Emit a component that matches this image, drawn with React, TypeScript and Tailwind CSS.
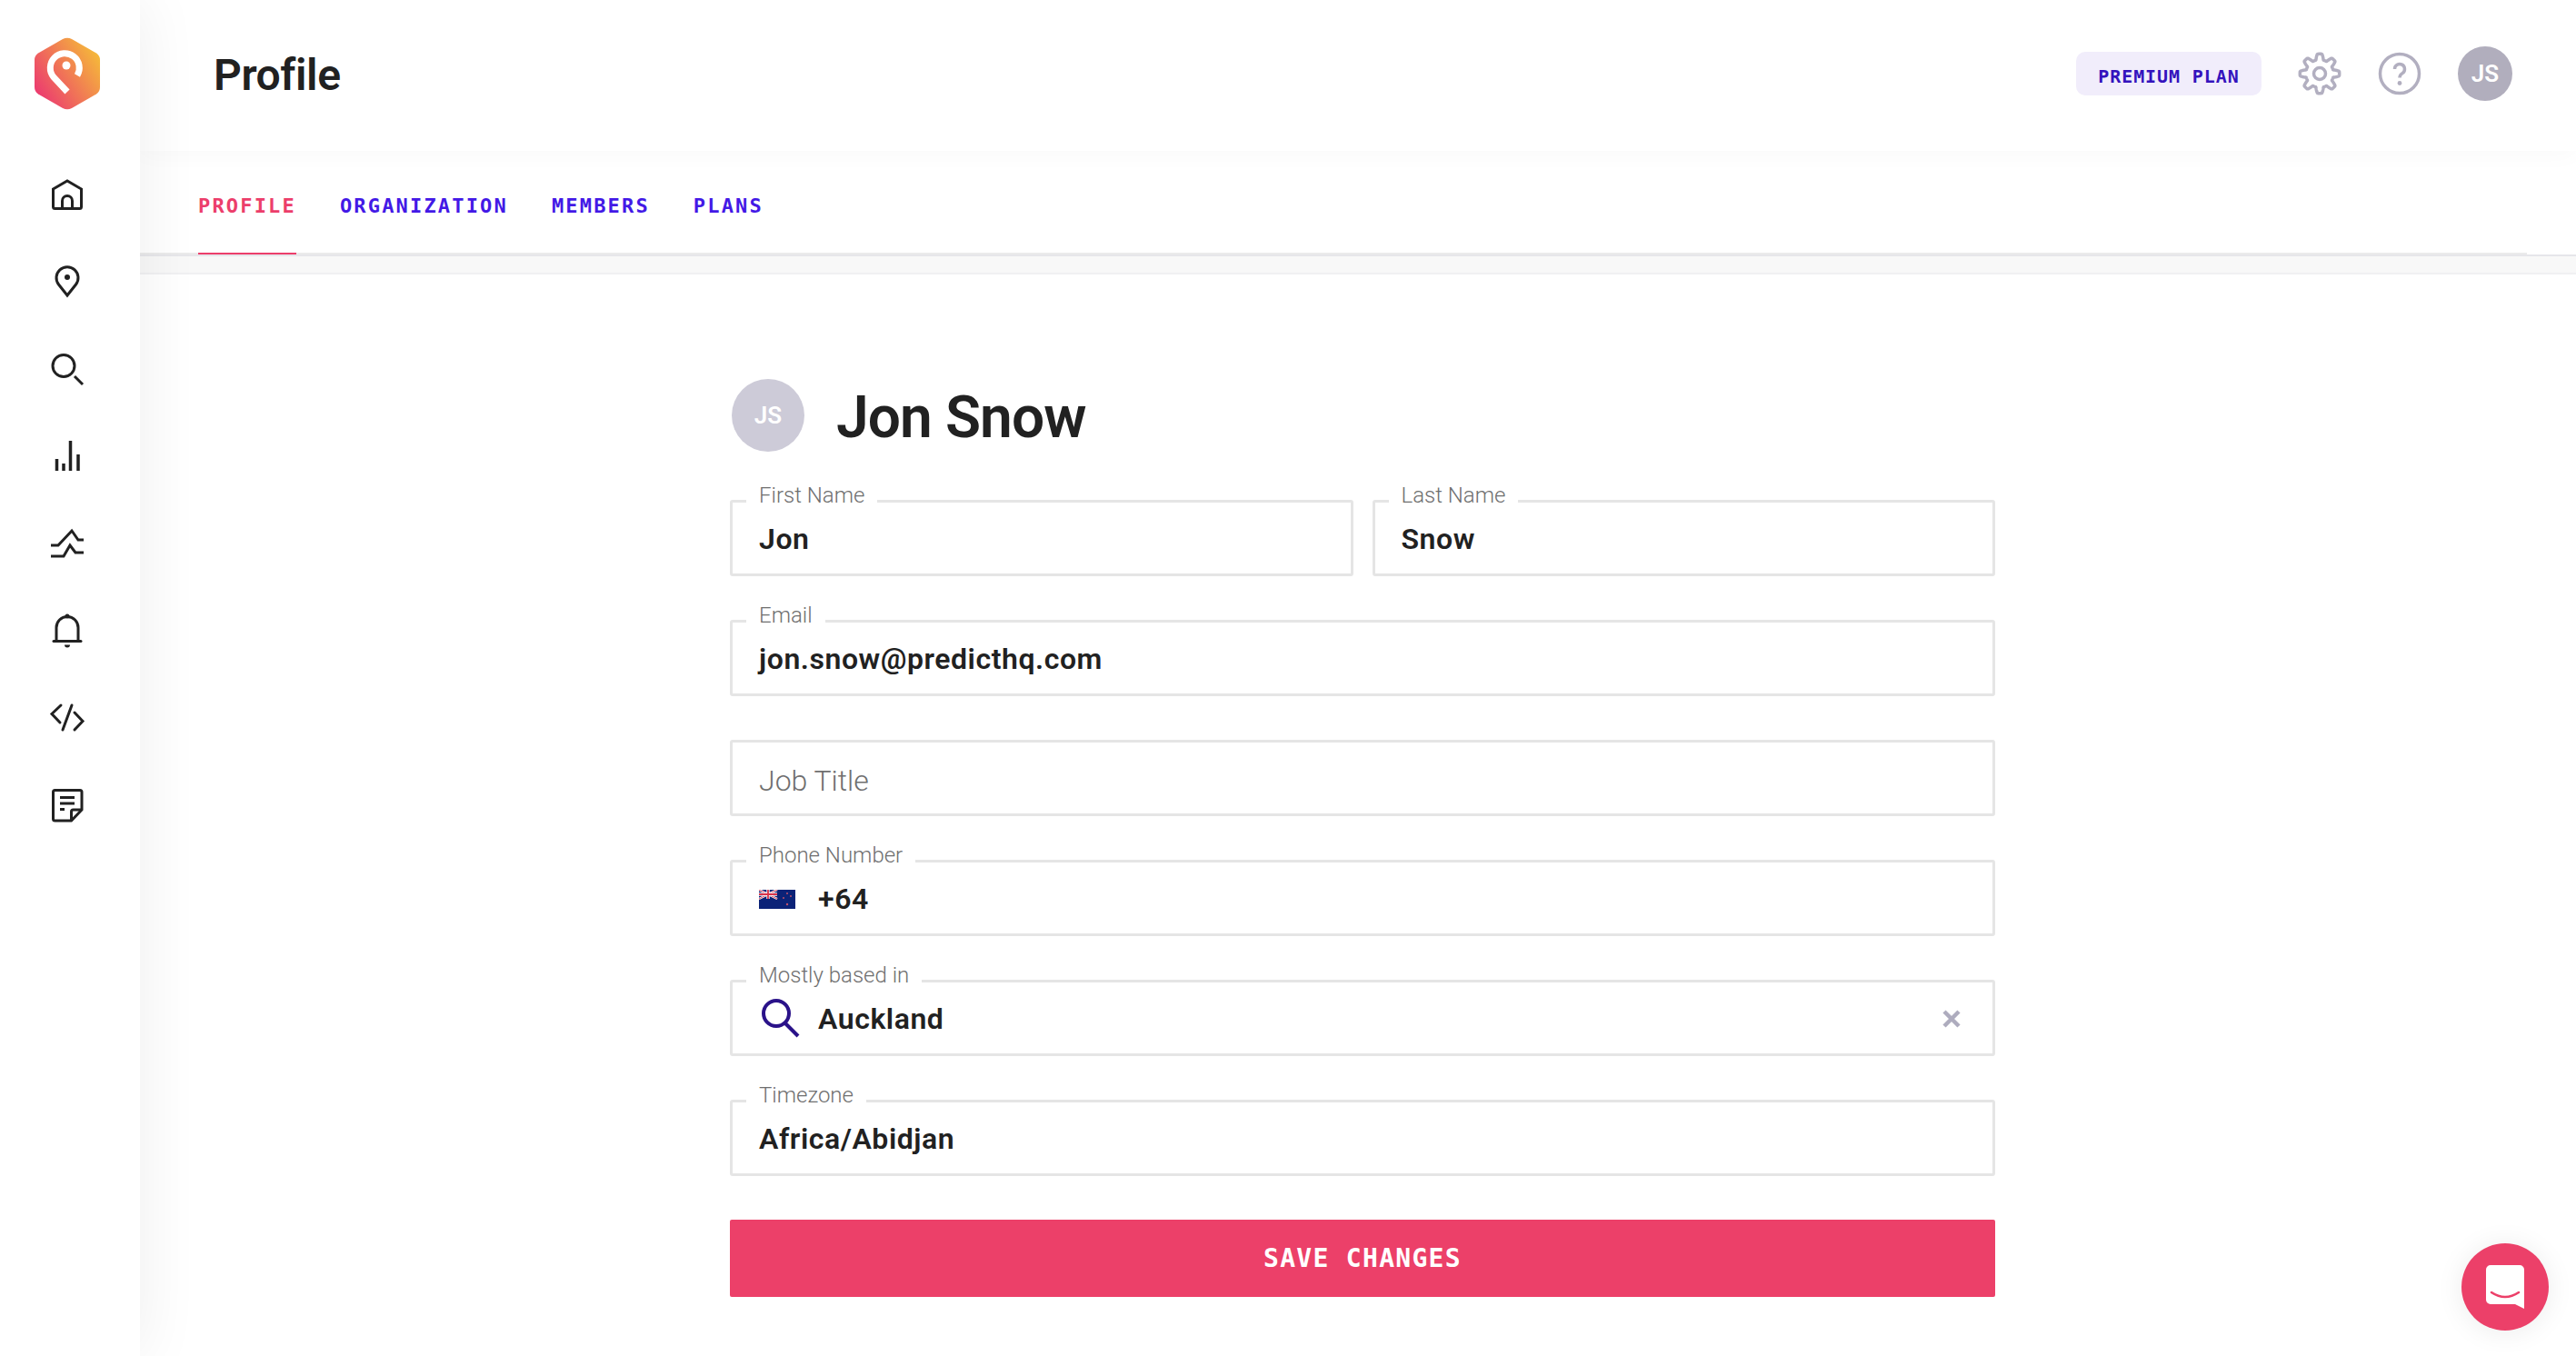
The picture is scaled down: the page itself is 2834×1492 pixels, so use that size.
import { ReactNode } from "react";

const sans = "font-['Roboto',sans-serif]";

function gearPath() {
  const pts: string[] = [];
  for (let i = 0; i < 240; i++) {
    const t = (i / 240) * Math.PI * 2;
    const wave = Math.max(-1, Math.min(1, Math.cos(8 * t) * 1.7));
    const r = 18.5 + wave * 3.2;
    const x = 24 + r * Math.sin(t);
    const y = 24 - r * Math.cos(t);
    pts.push(`${x.toFixed(2)} ${y.toFixed(2)}`);
  }
  return "M" + pts.join("L") + "Z";
}

function Logo() {
  return (
    <svg width="72" height="80" viewBox="0 0 72 80">
      <defs>
        <linearGradient id="logoGrad" x1="0.08" y1="0.8" x2="0.95" y2="0.2">
          <stop offset="0" stopColor="#ec3e6e" />
          <stop offset="1" stopColor="#f5b83a" />
        </linearGradient>
      </defs>
      <path
        d="M31 2 Q36 -0.5 41 2 L68 17.5 Q72 20 72 25 V55 Q72 60 68 62.5 L41 78 Q36 80.5 31 78 L4 62.5 Q0 60 0 55 V25 Q0 20 4 17.5 Z"
        fill="url(#logoGrad)"
      />
      <path
        d="M36 60 L21 44 A16 16 0 1 1 47 42"
        fill="none"
        stroke="#fff"
        strokeWidth="7"
      />
      <circle cx="35" cy="31" r="4.5" fill="#fff" />
    </svg>
  );
}

const navIcons: ReactNode[] = [
  <>
    <path d="M8.5 19 L24 10 L39.5 19 V38.5 a2 2 0 0 1 -2 2 H10.5 a2 2 0 0 1 -2 -2 Z" />
    <path d="M18.5 40 V32 a5.5 5.5 0 0 1 11 0 V40" />
  </>,
  <>
    <path d="M24 40 L14.5 28 A12 12 0 1 1 33.5 28 Z" />
    <circle cx="24" cy="20" r="3" fill="#212121" stroke="none" />
  </>,
  <>
    <circle cx="20" cy="21.5" r="12" />
    <path d="M32 33 L41 42" />
  </>,
  <path d="M12.5 28 V41 M20 33 V41 M27.5 8 V41 M36 23 V41" strokeWidth="3.5" />,
  <>
    <path d="M6 27 H14 L29 11 L36 21 H42" />
    <path d="M6 39 H20 L27 27 L33 35 H42" />
  </>,
  <>
    <path d="M12 36.5 V21.5 a12 12 0 0 1 24 0 V36.5" />
    <path d="M9 36.5 H39" strokeLinecap="round" />
    <path d="M21 40.5 h6 a3 3 0 0 1 -6 0 Z" fill="#212121" stroke="none" />
    <circle cx="24" cy="9" r="2.5" fill="#212121" stroke="none" />
  </>,
  <path d="M17 11 L7 20.5 L16 30 M32 19 L41 28.5 L32 38 M29 11 L19 38" strokeLinecap="round" />,
  <>
    <path d="M8.5 10.5 a2 2 0 0 1 2 -2 H38 a2 2 0 0 1 2 2 V30 L28.5 42 H10.5 a2 2 0 0 1 -2 -2 Z" />
    <path d="M28.5 42 V32 a2 2 0 0 1 2 -2 H40" />
    <path d="M16 16.5 H32 M16 23 H32 M16 29.5 H21" />
  </>,
];

function NavIcon({ children }: { children: ReactNode }) {
  return (
    <div className="flex h-24 items-center justify-center">
      <svg width="48" height="48" viewBox="0 0 48 48" fill="none" stroke="#212121" strokeWidth="3">
        {children}
      </svg>
    </div>
  );
}

function Flag() {
  return (
    <svg width="40" height="21" viewBox="0 0 40 21">
      <rect width="40" height="21" fill="#0b2277" />
      <path d="M0 0 L20 10 M20 0 L0 10" stroke="#fff" strokeWidth="2.4" />
      <path d="M0 0 L20 10 M20 0 L0 10" stroke="#d8334a" strokeWidth="0.9" />
      <path d="M10 0 V10 M0 5 H20" stroke="#fff" strokeWidth="3.4" />
      <path d="M10 0 V10 M0 5 H20" stroke="#d8334a" strokeWidth="1.8" />
      <g fill="#c0506a">
        <circle cx="31" cy="4" r="1" />
        <circle cx="35" cy="7" r="1" />
        <circle cx="27" cy="9" r="1" />
        <circle cx="31" cy="16" r="1.2" />
      </g>
    </svg>
  );
}

function Field({ label, children }: { label?: string; children: ReactNode }) {
  return (
    <div className="relative flex h-[84px] flex-1 items-center rounded-[3px] border-[3px] border-[#e5e5e5] pt-[2px] pl-[29px] pr-5">
      {label && (
        <span className="absolute top-[-26px] left-[15px] bg-white px-[14px] text-[24px] leading-[36px] font-light text-[#6f6f6f]">
          {label}
        </span>
      )}
      {children}
    </div>
  );
}

function Value({ children }: { children: ReactNode }) {
  return <span className="text-[32px] leading-[44px] font-semibold tracking-[0.55px] text-[#212121]">{children}</span>;
}

export default function App() {
  return (
    <div className={`flex h-screen overflow-hidden bg-white ${sans}`}>
      {/* Sidebar */}
      <aside className="relative z-10 flex w-[154px] shrink-0 flex-col items-center bg-white pr-[6px] shadow-[0_0_70px_rgba(0,0,0,0.07)]">
        <div className="flex h-[165px] items-center justify-center pb-[3px]">
          <Logo />
        </div>
        <div className="w-full">
          {navIcons.map((icon, i) => (
            <NavIcon key={i}>{icon}</NavIcon>
          ))}
        </div>
      </aside>

      <main className="flex min-w-0 flex-1 flex-col">
        {/* Top bar */}
        <header className="relative z-[5] flex h-[166px] shrink-0 items-center bg-white pl-[81px] shadow-[0_6px_24px_rgba(0,0,0,0.025)]">
          <h1 className="text-[48px] leading-none font-semibold tracking-[-0.4px] text-[#212121]">Profile</h1>
          <div className="ml-auto flex items-center pr-[70px] pb-1">
            <span className="flex h-12 w-[204px] items-center justify-center rounded-[10px] bg-[#f1edfb] pt-[6px] font-['DejaVu_Sans_Mono',monospace] text-[20px] font-bold tracking-[0.9px] text-[#3413bd]">
              PREMIUM PLAN
            </span>
            <svg className="ml-[40px]" width="48" height="48" viewBox="0 0 48 48" fill="none" stroke="#b2afc0" strokeWidth="3.5">
              <path d={gearPath()} strokeLinejoin="round" />
              <circle cx="24" cy="24" r="6.5" />
            </svg>
            <svg className="ml-[40px]" width="48" height="48" viewBox="0 0 48 48" fill="none" stroke="#b2afc0" strokeWidth="3.5">
              <circle cx="24" cy="24" r="21.5" />
              <path d="M18.5 19 a5.5 5.5 0 1 1 8.5 4.6 c-2 1.3 -3 2.4 -3 4.9" strokeWidth="3.5" />
              <circle cx="24" cy="34.5" r="2.4" fill="#b2afc0" stroke="none" />
            </svg>
            <div className="ml-[40px] flex h-[60px] w-[60px] items-center justify-center rounded-full bg-[#b1aebd] text-[26px] font-semibold text-white">
              JS
            </div>
          </div>
        </header>

        {/* Tabs */}
        <div className="flex h-[136px] shrink-0 flex-col">
          <nav className="mr-[54px] flex h-[114px] gap-12 border-b-2 border-[#ebebeb] pl-[64px] font-['DejaVu_Sans_Mono',monospace] text-[22px] font-bold tracking-[2.17px]">
            <a className="-mb-[2px] flex h-[114px] items-start border-b-2 border-[#ec3e6b] pt-[48px] leading-[26px] text-[#ec3e6b]">PROFILE</a>
            <a className="pt-[48px] leading-[26px] text-[#4319e6]">ORGANIZATION</a>
            <a className="pt-[48px] leading-[26px] text-[#4319e6]">MEMBERS</a>
            <a className="pt-[48px] leading-[26px] text-[#4319e6]">PLANS</a>
          </nav>
          <div className="flex-1 border-t-2 border-b-2 border-t-[#e6e6ea] border-b-[#f0f0f2] bg-[#f8f8f8]" />
        </div>

        {/* Form */}
        <div className="pl-[649px]">
          <div className="w-[1392px]">
            <div className="mt-[115px] ml-[2px] flex h-20 items-center">
              <div className="flex h-20 w-20 items-center justify-center rounded-full bg-[#cdcbd8] text-[26px] font-semibold text-white">
                JS
              </div>
              <h2 className="ml-[35px] pt-[6px] text-[64px] leading-none font-semibold tracking-[-0.9px] text-[#212121]">Jon Snow</h2>
            </div>

            <div className="mt-[53px] flex flex-col gap-12">
              <div className="flex gap-[21px]">
                <Field label="First Name"><Value>Jon</Value></Field>
                <Field label="Last Name"><Value>Snow</Value></Field>
              </div>
              <div className="flex">
                <Field label="Email"><Value>jon.snow@predicthq.com</Value></Field>
              </div>
              <div className="flex">
                <Field><span className="pt-[3px] text-[32px] leading-[44px] font-light text-[#6f6f6f]">Job Title</span></Field>
              </div>
              <div className="flex">
                <Field label="Phone Number">
                  <Flag />
                  <span className="ml-[25px]"><Value>+64</Value></span>
                </Field>
              </div>
              <div className="flex">
                <Field label="Mostly based in">
                  <svg className="ml-[3px]" width="44" height="44" viewBox="0 0 44 44" fill="none" stroke="#2a1289" strokeWidth="4">
                    <circle cx="16" cy="16" r="14" />
                    <path d="M26 27 L40 41" />
                  </svg>
                  <span className="ml-[18px]"><Value>Auckland</Value></span>
                  <svg className="ml-auto mr-[15px]" width="20" height="20" viewBox="0 0 20 20" fill="none" stroke="#aeacbe" strokeWidth="4.5">
                    <path d="M2 2 L18 18 M18 2 L2 18" />
                  </svg>
                </Field>
              </div>
              <div className="flex">
                <Field label="Timezone"><Value>Africa/Abidjan</Value></Field>
              </div>
              <button className="h-[85px] rounded-[2px] bg-[#ec4069] font-['DejaVu_Sans_Mono',monospace] text-[28px] font-bold tracking-[1.3px] text-white">
                SAVE CHANGES
              </button>
            </div>
          </div>
        </div>
      </main>

      {/* Chat launcher */}
      <div className="absolute top-[1368px] left-[2708px] z-20 flex h-24 w-24 items-center justify-center rounded-full bg-[#ec4069] shadow-[0_2px_30px_rgba(0,0,0,0.08)]">
        <svg width="42" height="48" viewBox="0 0 42 48">
          <path d="M5 0 H37 a5 5 0 0 1 5 5 V48 L32 43 H5 a5 5 0 0 1 -5 -5 V5 a5 5 0 0 1 5 -5 Z" fill="#fff" />
          <path d="M6 30 Q21 40 36 30" fill="none" stroke="#ec4069" strokeWidth="2.6" strokeLinecap="round" />
        </svg>
      </div>
    </div>
  );
}
